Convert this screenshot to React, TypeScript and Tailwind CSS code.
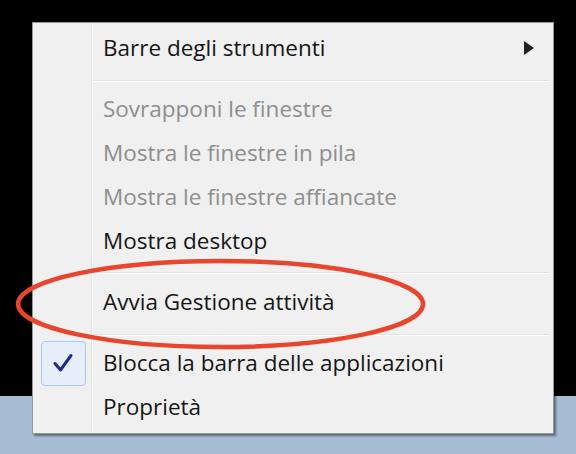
import React from 'react';

type Item = { label: string; disabled?: boolean; checked?: boolean; submenu?: boolean };

const groups: Item[][] = [
  [{ label: 'Barre degli strumenti', submenu: true }],
  [
    { label: 'Sovrapponi le finestre', disabled: true },
    { label: 'Mostra le finestre in pila', disabled: true },
    { label: 'Mostra le finestre affiancate', disabled: true },
    { label: 'Mostra desktop' },
  ],
  [{ label: 'Avvia Gestione attività' }],
  [{ label: 'Blocca la barra delle applicazioni', checked: true }, { label: 'Proprietà' }],
];

function Row({ item }: { item: Item }) {
  return (
    <div className="flex h-[44px] items-center">
      <div className="flex w-[58px] shrink-0 items-center justify-center pl-[2px]">
        {item.checked && (
          <div className="flex h-[45px] w-[45px] items-center justify-center rounded-[4px] border border-[#a9c9f2] bg-[#e6eefb]">
            <svg width="22" height="20" viewBox="0 0 22 20">
              <path d="M3 10.5 L8.5 17 L19 2.5" fill="none" stroke="#1f2a8e" strokeWidth="3" strokeLinejoin="round" strokeLinecap="round" />
            </svg>
          </div>
        )}
      </div>
      <div
        className={`flex-1 pl-[12px] text-[22.5px] leading-none ${item.disabled ? 'text-[#8e8e8e]' : 'text-[#161616]'}`}
      >
        {item.label}
      </div>
      {item.submenu && (
        <svg className="mr-[19px]" width="10" height="14" viewBox="0 0 10 14">
          <path d="M0 0 L10 7 L0 14 Z" fill="#222" />
        </svg>
      )}
    </div>
  );
}

function Separator({ offset }: { offset: string }) {
  return (
    <div className={`h-[17px] pl-[61px] pr-[4px] ${offset}`}>
      <div className="h-[1px] bg-[#e2e2e2]" />
      <div className="h-[1px] bg-white" />
    </div>
  );
}

export default function App() {
  return (
    <div
      className="relative flex h-[454px] w-[576px] flex-col overflow-hidden bg-black"
      style={{ fontFamily: '"Open Sans", "Noto Sans", sans-serif' }}
    >
      <div className="flex-1 bg-black" />
      <div className="h-[58px] bg-[#a7bdd4]" />

      <div className="absolute left-[32px] top-[22px] w-[522px] border border-[#979797] bg-[#f0f0f0] pb-[4px] pt-[3px] shadow-[2px_2px_2px_rgba(0,0,0,0.45)]">
        <div className="absolute bottom-[2px] left-[58px] top-[2px] w-[1px] bg-[#e2e3e3]" />
        <div className="absolute bottom-[2px] left-[59px] top-[2px] w-[1px] bg-white" />
        {groups.map((g, i) => (
          <React.Fragment key={i}>
            {i > 0 && <Separator offset={i === 2 ? 'pt-[9px]' : 'pt-[10px]'} />}
            {g.map((item) => (
              <Row key={item.label} item={item} />
            ))}
          </React.Fragment>
        ))}
      </div>

      <svg className="pointer-events-none absolute left-0 top-0" width="576" height="454">
        <ellipse cx="220.5" cy="304" rx="202.5" ry="43" fill="none" stroke="#e8452c" strokeWidth="4.5" />
      </svg>
    </div>
  );
}
